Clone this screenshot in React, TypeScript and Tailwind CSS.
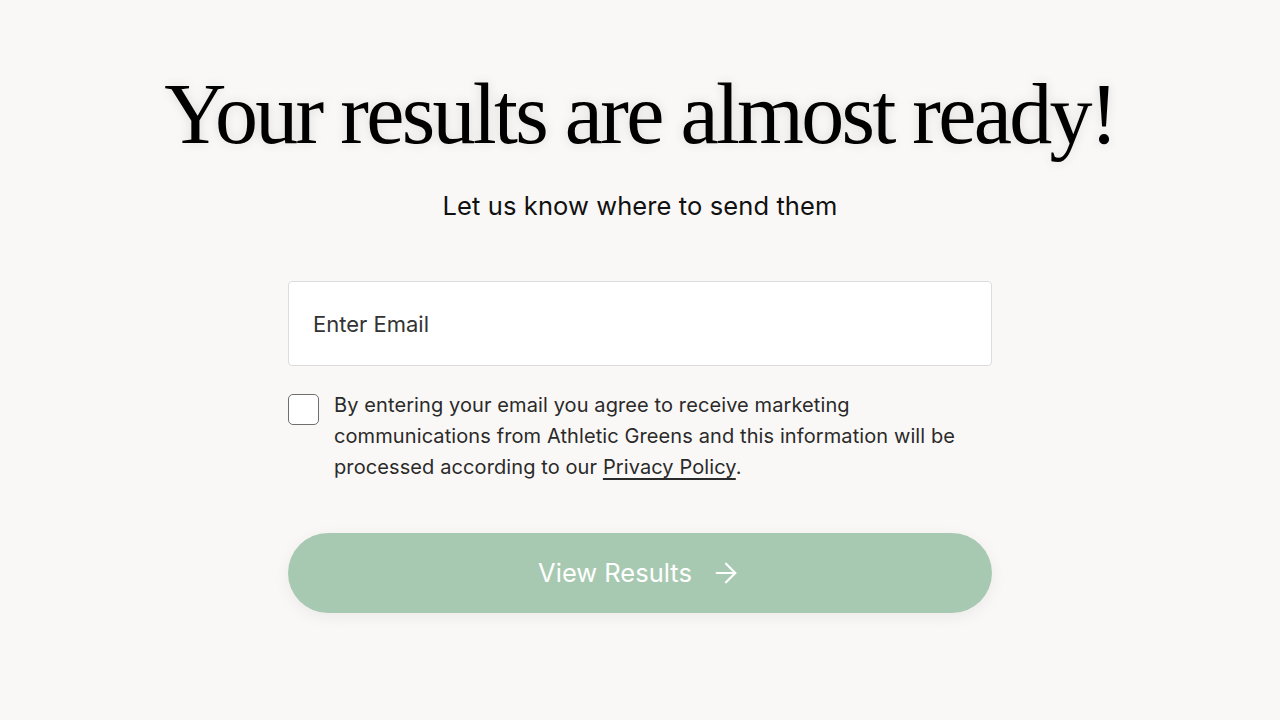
import { ArrowRight } from "lucide-react";

export default function App() {
  return (
    <main className="flex min-h-[720px] w-full flex-col items-center bg-[#faf8f6] pt-[66px] font-['Inter',sans-serif] text-[#1c1c1c]">
      <h1 className="font-['Liberation_Serif',serif] text-[86px] leading-[96px] tracking-[-2.7px] text-black [text-shadow:0_0_12px_rgba(0,0,0,0.12)]">
        Your results are almost ready!
      </h1>
      <p className="mt-[28px] text-[25.5px] leading-[32px] tracking-[0.1px] text-[#111]">
        Let us know where to send them
      </p>

      <form className="mt-[59px] flex w-[704px] flex-col">
        <input
          type="email"
          placeholder="Enter Email"
          className="h-[85px] w-full rounded-[4px] border border-[#dcdcdc] bg-white px-[24px] text-[22px] text-[#222] placeholder:text-[#333] outline-none"
        />

        <label className="mt-[28px] flex items-start gap-[15px]">
          <span className="h-[31px] w-[31px] shrink-0 rounded-[5px] border-[1.5px] border-[#6f6f6f] bg-white" />
          <span className="mt-[-4px] w-[635px] text-[20px] leading-[31px] tracking-[0.1px] text-[#2a2a2a]">
            By entering your email you agree to receive marketing
            communications from Athletic Greens and this information will be
            processed according to our{" "}
            <a href="#" className="underline underline-offset-4">
              Privacy Policy
            </a>
            .
          </span>
        </label>

        <button
          type="button"
          className="mt-[50px] flex h-[80px] w-full items-center justify-center gap-[18px] rounded-full bg-[#a8c9b1] text-[25.5px] text-white shadow-[0_4px_16px_rgba(0,0,0,0.06)]"
        >
          View Results
          <ArrowRight className="h-[32px] w-[32px]" strokeWidth={1.6} />
        </button>
      </form>
    </main>
  );
}
